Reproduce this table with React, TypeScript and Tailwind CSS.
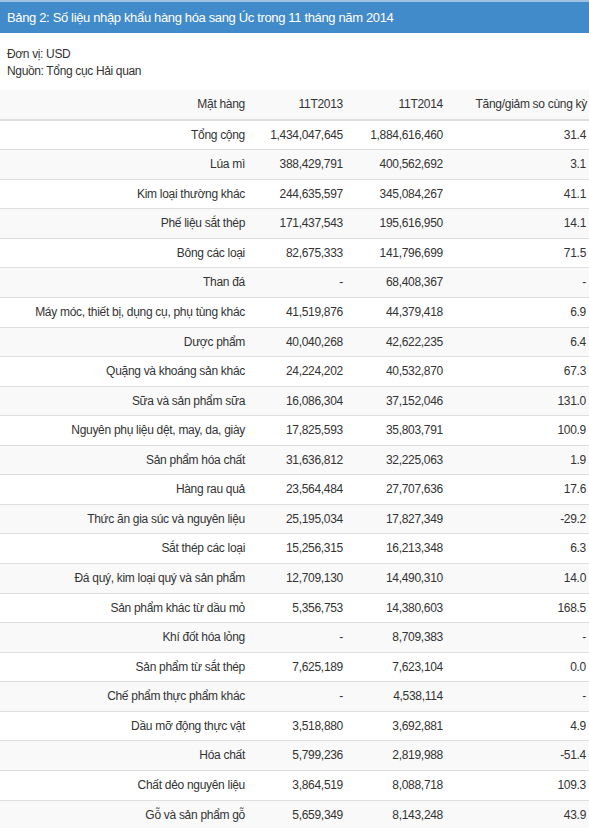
import React from "react";

const rows: [string, string, string, string][] = [
  ["Tổng cộng", "1,434,047,645", "1,884,616,460", "31.4"],
  ["Lúa mì", "388,429,791", "400,562,692", "3.1"],
  ["Kim loại thường khác", "244,635,597", "345,084,267", "41.1"],
  ["Phế liệu sắt thép", "171,437,543", "195,616,950", "14.1"],
  ["Bông các loại", "82,675,333", "141,796,699", "71.5"],
  ["Than đá", "-", "68,408,367", "-"],
  ["Máy móc, thiết bị, dụng cụ, phụ tùng khác", "41,519,876", "44,379,418", "6.9"],
  ["Dược phẩm", "40,040,268", "42,622,235", "6.4"],
  ["Quặng và khoáng sản khác", "24,224,202", "40,532,870", "67.3"],
  ["Sữa và sản phẩm sữa", "16,086,304", "37,152,046", "131.0"],
  ["Nguyên phụ liệu dệt, may, da, giày", "17,825,593", "35,803,791", "100.9"],
  ["Sản phẩm hóa chất", "31,636,812", "32,225,063", "1.9"],
  ["Hàng rau quả", "23,564,484", "27,707,636", "17.6"],
  ["Thức ăn gia súc và nguyên liệu", "25,195,034", "17,827,349", "-29.2"],
  ["Sắt thép các loại", "15,256,315", "16,213,348", "6.3"],
  ["Đá quý, kim loại quý và sản phẩm", "12,709,130", "14,490,310", "14.0"],
  ["Sản phẩm khác từ dầu mỏ", "5,356,753", "14,380,603", "168.5"],
  ["Khí đốt hóa lỏng", "-", "8,709,383", "-"],
  ["Sản phẩm từ sắt thép", "7,625,189", "7,623,104", "0.0"],
  ["Chế phẩm thực phẩm khác", "-", "4,538,114", "-"],
  ["Dầu mỡ động thực vật", "3,518,880", "3,692,881", "4.9"],
  ["Hóa chất", "5,799,236", "2,819,988", "-51.4"],
  ["Chất dẻo nguyên liệu", "3,864,519", "8,088,718", "109.3"],
  ["Gỗ và sản phẩm gỗ", "5,659,349", "8,143,248", "43.9"],
];

export default function App() {
  return (
    <div
      className="w-[589px] bg-white text-[#333333]"
      style={{ fontFamily: '"Liberation Sans", Arial, sans-serif' }}
    >
      <div className="border-t-2 border-[#9ec2e4] bg-[#428bca] px-[7px] h-[33px] flex items-center text-white text-[13px] tracking-[-0.35px]">
        Bảng 2: Số liệu nhập khẩu hàng hóa sang Úc trong 11 tháng năm 2014
      </div>
      <div className="px-[7px] pt-[13px] text-[12px] leading-[17px] h-[57px] tracking-[-0.35px]">
        <div>Đơn vị: USD</div>
        <div>Nguồn: Tổng cục Hải quan</div>
      </div>
      <table className="w-[589px] table-fixed border-collapse text-[12px] leading-[18.57px] tracking-[-0.3px]">
        <colgroup>
          <col className="w-[250px]" />
          <col className="w-[98px]" />
          <col className="w-[100px]" />
          <col className="w-[141px]" />
        </colgroup>
        <thead>
          <tr className="bg-[#f9f9f9]">
            <th className="font-normal text-right px-[5px] py-[5px] border-b-2 border-[#dddddd]">Mặt hàng</th>
            <th className="font-normal text-right px-[5px] py-[5px] border-b-2 border-[#dddddd]">11T2013</th>
            <th className="font-normal text-right px-[5px] py-[5px] border-b-2 border-[#dddddd]">11T2014</th>
            <th className="font-normal text-right pl-[5px] pr-[2px] py-[5px] border-b-2 border-[#dddddd]">Tăng/giảm so cùng kỳ</th>
          </tr>
        </thead>
        <tbody>
          {rows.map((r, i) => (
            <tr key={i} className={i % 2 === 1 ? "bg-[#f9f9f9]" : "bg-white"}>
              <td className="text-right px-[5px] py-[5px] border-t border-[#dddddd]">{r[0]}</td>
              <td className="text-right px-[5px] py-[5px] border-t border-[#dddddd]">{r[1]}</td>
              <td className="text-right px-[5px] py-[5px] border-t border-[#dddddd]">{r[2]}</td>
              <td className="text-right pl-[5px] pr-[3px] py-[5px] border-t border-[#dddddd]">{r[3]}</td>
            </tr>
          ))}
        </tbody>
      </table>
    </div>
  );
}
